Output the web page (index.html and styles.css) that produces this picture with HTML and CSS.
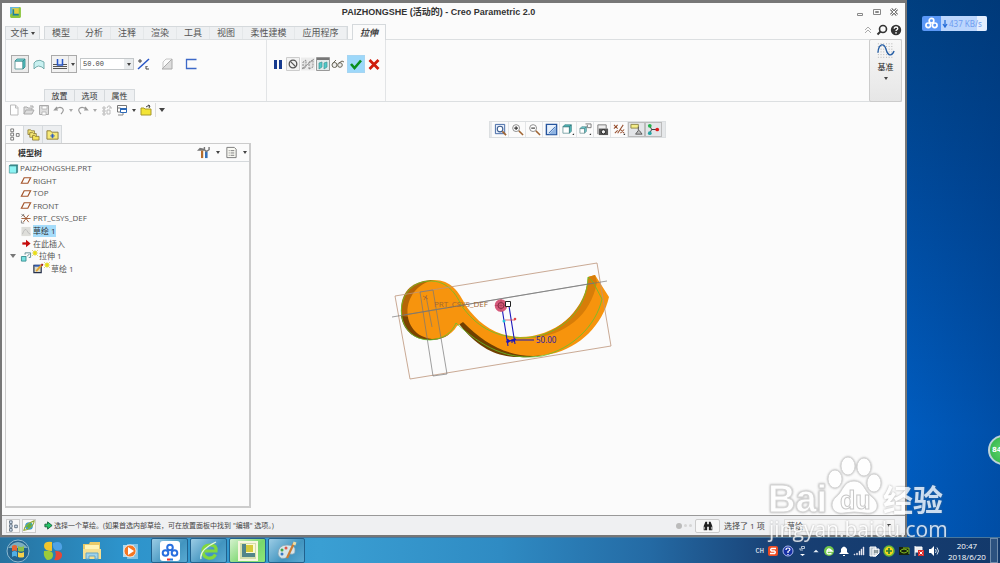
FILE: index.html
```
<!DOCTYPE html>
<html lang="zh">

    <head>
        <meta charset="UTF-8">
        <meta name="viewport" content="width=device-width, initial-scale=1.0">
        <title>PAIZHONGSHE - Creo Parametric 2.0</title>
        <link rel="stylesheet" href="styles.css">
    </head>

    <body>
        <svg class="defs" aria-hidden="true">
            <symbol id="plane" viewBox="0 0 12 12">
                <path d="M4 3h7l-3 6H1z" fill="none" stroke="#a5562c" stroke-width="1.3" />
            </symbol>
            <symbol id="star" viewBox="0 0 6 6">
                <path d="M0 0l6 6M6 0L0 6M3 0v6M0 3h6" stroke="#d8c62a" stroke-width=".6" />
                <circle cx="3" cy="3" r="1.9" fill="#e8df14" />
            </symbol>
        </svg>

        <div class="desktop">
            <main class="window">
                <header class="titlebar">
                    <svg class="app-icon" viewBox="0 0 12 12">
                        <rect x="1" y="1" width="10" height="10" rx="1" fill="#8cc63e" />
                        <path d="M1 1h9L1 8z" fill="#64b6dc" />
                        <rect x="3" y="2" width="6" height="6" fill="#e2cf3f" />
                        <path d="M4 3v5h5" fill="none" stroke="#19819d" stroke-width="1.5" />
                    </svg>
                    <h1>PAIZHONGSHE (活动的) - Creo Parametric 2.0</h1>
                    <div class="win-buttons">
                        <button aria-label="最小化"><svg viewBox="0 0 10 10"><path d="M2.500 6.500h5v2h-5z" fill="none" stroke="#888" /></svg></button>
                        <button aria-label="最大化"><svg viewBox="0 0 10 10"><path d="M1.500 2.500h7v5h-7zM3.500 4.500h3v1h-3z" fill="none" stroke="#888" /></svg></button>
                        <button aria-label="关闭"><svg viewBox="0 0 10 10"><path d="M2 2l6 6M8 2L2 8" stroke="#777" stroke-width="3" /><path d="M2 2l6 6M8 2L2 8" stroke="#fff" /></svg></button>
                    </div>
                </header>

                <nav class="tabs">
                    <button class="file-tab">文件<i class="caret"></i></button>
                    <div class="tab-group">
                        <button>模型</button>
                        <button>分析</button>
                        <button>注释</button>
                        <button>渲染</button>
                        <button>工具</button>
                        <button>视图</button>
                        <button class="wide">柔性建模</button>
                        <button class="wide">应用程序</button>
                    </div>
                    <button class="active-tab">拉伸</button>
                    <div class="help-buttons">
                        <button aria-label="收起"><svg viewBox="0 0 12 12"><path d="M3 6l3-3 3 3M3 9l3-3 3 3" fill="none" stroke="#aaa" /></svg></button>
                        <button aria-label="搜索"><svg viewBox="0 0 12 12"><circle cx="7" cy="5" r="3.500" fill="none" stroke="#333" stroke-width="1.600" /><path d="M4.500 7.500L1.500 10.500" stroke="#333" stroke-width="2" /></svg></button>
                        <button aria-label="帮助"><svg viewBox="0 0 12 12"><circle cx="6" cy="6" r="5.200" fill="#333" /><path d="M4.200 4.700q0-1.700 1.800-1.700t1.800 1.500q0 .8-1 1.300-.8.400-.8 1.300" fill="none" stroke="#fff" stroke-width="1.300" /><circle cx="6" cy="8.900" r=".8" fill="#fff" /></svg></button>
                    </div>
                </nav>

                <section class="ribbon">
                    <div class="options">
                        <div class="tool-row">
                            <button class="tool pressed" aria-label="实体"><svg viewBox="0 0 14 14"><path d="M2 4h8v8H2z" fill="#fff" stroke="#6fa3a3" /><path d="M2 4l2-2h8l-2 2z" fill="#8adede" stroke="#2c8589" stroke-width=".8" /><path d="M10 4l2-2v8l-2 2z" fill="#5cc9c9" stroke="#2c8589" stroke-width=".8" /></svg></button>
                            <button class="tool" aria-label="曲面"><svg viewBox="0 0 14 14"><path d="M2 12V6l2-2q4-2 8 1v7l-2-2q-4-2-6 0z" fill="#c9f1f1" stroke="#6aa5a5" stroke-width=".9" /></svg></button>
                            <div class="split">
                                <button aria-label="深度"><svg viewBox="0 0 14 14"><path d="M0 7.500h4M10 7.500h4M0 9.500h14M0 11.500h14" stroke="#555" /><path d="M4.500 2v6h5V2" fill="#dfe9fb" stroke="#2755c5" stroke-width="1.500" /></svg></button>
                                <button class="split-arrow" aria-label="深度选项"><i class="caret"></i></button>
                            </div>
                            <div class="depth">
                                <input type="text" value="50.00" aria-label="深度值">
                                <button aria-label="最近值"><i class="caret"></i></button>
                            </div>
                            <button class="tool slim" aria-label="反向"><svg viewBox="0 0 14 14"><path d="M1 12L12 2" stroke="#2755c5" stroke-width="1.500" /><path d="M3 2v4M1 4h4M10 9v1M12 12H9V9" fill="none" stroke="#444" /></svg></button>
                            <button class="tool" aria-label="移除材料"><svg viewBox="0 0 14 14"><path d="M2 12L12 2v10z" fill="#ddd" stroke="#aaa" /><path d="M3 5v7M3 5l3-3h6" fill="none" stroke="#bbb" stroke-width=".8" /></svg></button>
                            <button class="tool" aria-label="加厚"><svg viewBox="0 0 14 14"><path d="M12.500 2.500h-10v9h10" fill="none" stroke="#3d69c8" stroke-width="1.300" /></svg></button>
                        </div>
                        <div class="sub-tabs">
                            <button>放置</button>
                            <button>选项</button>
                            <button>属性</button>
                        </div>
                    </div>
                    <div class="confirm">
                        <button aria-label="暂停"><svg viewBox="0 0 14 14"><path d="M3 3h3v9H3zM8 3h3v9H8z" fill="#163a8e" /></svg></button>
                        <button aria-label="无预览"><svg viewBox="0 0 14 14"><path d="M.5.5h13v13H.5z" fill="#f2f2f2" stroke="#ccc" /><circle cx="7" cy="7" r="3.800" fill="none" stroke="#555" stroke-width="1.300" /><path d="M4.400 4.400l5.200 5.200" stroke="#555" stroke-width="1.300" /></svg></button>
                        <button aria-label="分离"><svg viewBox="0 0 14 14"><path d="M0 .5h14v13H0z" fill="#ececec" /><path d="M2 12V5l3-2v7zM8 12V5l4-2v7z" fill="#e2e2e2" stroke="#777" stroke-width=".8" stroke-dasharray="2 1" /><path d="M1 12L13 2" stroke="#888" stroke-width=".8" /></svg></button>
                        <button aria-label="连接"><svg viewBox="0 0 14 14"><path d="M.5.5h13v13H.5z" fill="#e2eaea" stroke="#999" /><path d="M1 2h12" stroke="#777" stroke-width="2" /><path d="M3 12V6l3-1v5zM8 12V6l3-1v5z" fill="#51caca" stroke="#429797" stroke-width=".7" /></svg></button>
                        <button aria-label="特征预览"><svg viewBox="0 0 14 14"><circle cx="3.500" cy="8" r="2.500" fill="#eee" stroke="#666354" /><circle cx="9" cy="8" r="2.300" fill="#eee" stroke="#666354" /><path d="M2 6l3-3M8 6l3-2 2 1" fill="none" stroke="#666354" /></svg></button>
                        <button class="ok" aria-label="确定"><svg viewBox="0 0 14 14"><path d="M2 7l3.500 4L12 3.500" fill="none" stroke="#0a8f1d" stroke-width="2.600" /></svg></button>
                        <button aria-label="取消"><svg viewBox="0 0 14 14"><path d="M2.500 3l9 9M11.500 3l-9 9" stroke="#cf1c0c" stroke-width="2.800" /></svg></button>
                    </div>
                    <button class="datum">
                        <svg viewBox="0 0 20 20"><path d="M1 2h18M1 5h18M1 8h18M1 11h18M1 14h18M1 17h18" stroke="#aaa" stroke-dasharray="1 2" /><path d="M1 12C2 1 8 1 10 8s6 9 9 2" fill="none" stroke="#245da5" stroke-width="1.500" /></svg>
                        <span>基准</span>
                        <i class="caret"></i>
                    </button>
                </section>

                <div class="quick">
                    <button aria-label="新建"><svg viewBox="0 0 12 12"><path d="M2.500 1h5l2.500 2.500V11H2.500zM7.500 1v3H10" fill="#fff" stroke="#bbb" /></svg></button>
                    <button aria-label="打开"><svg viewBox="0 0 12 12"><path d="M1 10V3h3l1 1h4v2M1 10l2-4h8l-2 4zM7 2h3v2" fill="#ddd" stroke="#aaa" /></svg></button>
                    <button aria-label="保存"><svg viewBox="0 0 12 12"><path d="M1.500 1.500h9v9h-9z" fill="#ddd" stroke="#aaa" /><path d="M4 2h5v3H4zM4 8h4v3H4z" fill="#fff" stroke="#aaa" stroke-width=".7" /></svg></button>
                    <button aria-label="撤消"><svg viewBox="0 0 12 12"><path d="M4 3L1.500 6H5M2 6q4-4 7-2t-1 6" fill="none" stroke="#999" stroke-width="1.200" /></svg></button>
                    <button class="arrow" aria-label="撤消列表"><i class="caret light"></i></button>
                    <button aria-label="重做"><svg viewBox="0 0 12 12"><path d="M8 3l2.500 3H7M10 6Q6 2 3 4t1 6" fill="none" stroke="#999" stroke-width="1.200" /></svg></button>
                    <button class="arrow" aria-label="重做列表"><i class="caret light"></i></button>
                    <button aria-label="再生"><svg viewBox="0 0 12 12"><path d="M2 3h2v2H2zM2 6h2v2H2zM2 9h2v2H2zM6 6h3v4H6zM6 4q1-3 3-2l1 2M8 4h3" fill="none" stroke="#bbb" /></svg></button>
                    <button class="roomy" aria-label="窗口"><svg viewBox="0 0 12 12"><path d="M1.500 4V1.500h9V5M1.500 4h3v4h-3z" fill="#fff" stroke="#777" /><path d="M4.500 4.500h6v4h-6z" fill="#fff" stroke="#2c68b6" /><path d="M4 5h7" stroke="#2c68b6" stroke-width="2" /><path d="M2 11h5V9" fill="none" stroke="#888" /></svg></button>
                    <button class="arrow" aria-label="窗口列表"><i class="caret"></i></button>
                    <button aria-label="关闭窗口"><svg viewBox="0 0 12 12"><path d="M1 11V4h3l1 1h6v6z" fill="#f3e436" stroke="#a7982a" /><path d="M6 3q2-2 4-1M8 1l2 1-1 2" fill="none" stroke="#444" /></svg></button>
                    <span class="sep"></span>
                    <button class="arrow" aria-label="自定义"><i class="caret big"></i></button>
                </div>

                <div class="work">
                    <aside class="navigator">
                        <div class="nav-tabs">
                            <button class="current" aria-label="模型树"><svg viewBox="0 0 14 14"><path d="M3 1h3v3H3zM3 5.500h3v3H3zM3 10h3v3H3zM9 6h3v3H9z" fill="#fff" stroke="#666" stroke-width=".9" /></svg></button>
                            <button aria-label="文件夹浏览器"><svg viewBox="0 0 14 14"><path d="M1 7V2h3l1 1h3v4z" fill="#f4e779" stroke="#806e2b" stroke-width=".8" /><path d="M3 10V5h3l1 1h3v4z" fill="#f4e779" stroke="#806e2b" stroke-width=".8" /><path d="M6 13V8h2l1 1h4v4z" fill="#f4e45a" stroke="#806e2b" stroke-width=".8" /></svg></button>
                            <button aria-label="收藏夹"><svg viewBox="0 0 14 14"><path d="M1 12V3h4l1 1.500h7V12z" fill="#f7ea79" stroke="#8c7c37" /><path d="M7 6v5M4.500 8.500h5M5.500 7l3 3M8.500 7l-3 3" stroke="#2454c5" stroke-width=".9" /></svg></button>
                        </div>
                        <div class="tree-panel">
                            <div class="tree-head">
                                <h2>模型树</h2>
                                <button aria-label="设置"><svg viewBox="0 0 14 14"><path d="M0 5l3-3 5 1v2H4z" fill="#777" /><path d="M5.500 5v8" stroke="#b56d2d" stroke-width="2.400" /><path d="M10 6v7" stroke="#3571ba" stroke-width="2.800" /><path d="M8 1v3l2 2 3-2V1" fill="none" stroke="#777" stroke-width="1.500" /></svg></button>
                                <i class="caret"></i>
                                <button aria-label="显示"><svg viewBox="0 0 14 14"><path d="M2 1.500h8l2 2v9H2z" fill="#fafaf4" stroke="#777" /><path d="M4 5h1M4 7.500h1M4 10h1M6 5h4M6 7.500h4M6 10h4" stroke="#777" /></svg></button>
                                <i class="caret"></i>
                            </div>
                            <ul class="tree">
                                <li class="root"><svg viewBox="0 0 12 12"><path d="M2 3h8v8H2z" fill="#8df4f4" stroke="#4a9a9c" stroke-width=".8" /><path d="M2 3l1-1h8L10 3zM10 3l1-1v8l-1 1z" fill="#3b8b8e" stroke="#2b7b7e" stroke-width=".6" /></svg>PAIZHONGSHE.PRT</li>
                                <li><svg><use href="#plane" /></svg>RIGHT</li>
                                <li><svg><use href="#plane" /></svg>TOP</li>
                                <li><svg><use href="#plane" /></svg>FRONT</li>
                                <li><svg viewBox="0 0 12 12"><path d="M1 6h10M3 2l6 8M9 2l-6 8" stroke="#9f5932" /><path d="M1 1l3 3M4 1L1 4M1 8v3h3" fill="none" stroke="#666" stroke-width=".8" /></svg>PRT_CSYS_DEF</li>
                                <li><svg viewBox="0 0 12 12"><path d="M1 1h10v10H1z" fill="#dededa" /><path d="M2 9q3-8 5-4t4 4" fill="none" stroke="#bbb" /></svg><mark>草绘 1</mark></li>
                                <li><svg viewBox="0 0 12 12"><path d="M2 6h7" stroke="#c50c0c" stroke-width="2.500" /><path d="M6 2l5 4-5 4z" fill="#c50c0c" /></svg>在此插入</li>
                                <li class="open"><i class="caret big"></i><svg viewBox="0 0 12 12"><path d="M1 6h5v5H1z" fill="#79e0e0" stroke="#378f92" /><path d="M5 4V2h6v5H9M7 6l3-3" fill="none" stroke="#5a8a90" /></svg><svg class="new"><use href="#star" /></svg>拉伸 1</li>
                                <li class="nested"><svg viewBox="0 0 12 12"><path d="M1.500 2.500h8v8h-8z" fill="#dcdccb" stroke="#26314c" stroke-width="1.300" /><path d="M2 3h7" stroke="#3159ab" stroke-width="2" /><path d="M4 9l6-7" stroke="#e6a52b" stroke-width="2" /><path d="M10 3l1-2" stroke="#a22" stroke-width="2" /></svg><svg class="new"><use href="#star" /></svg>草绘 1</li>
                            </ul>
                        </div>
                    </aside>

                    <section class="viewport">
                        <div class="view-bar">
                            <button aria-label="重新调整"><svg viewBox="0 0 14 14"><path d="M1.500 1.500h10v10h-10z" fill="#e7eefb" stroke="#3f64a1" /><circle cx="6.500" cy="6.500" r="3" fill="#fff" stroke="#3d5f91" stroke-width="1.200" /><path d="M9 9l4 4" stroke="#a06431" stroke-width="1.800" /></svg></button>
                            <button aria-label="放大"><svg viewBox="0 0 14 14"><circle cx="5.500" cy="5.500" r="3.700" fill="#fff" stroke="#888" /><path d="M3.500 5.500h4M5.500 3.500v4" stroke="#333" stroke-width="1.200" /><path d="M8.500 8.500L13 13" stroke="#a06431" stroke-width="1.600" /></svg></button>
                            <button aria-label="缩小"><svg viewBox="0 0 14 14"><circle cx="5.500" cy="5.500" r="3.700" fill="#fff" stroke="#888" /><path d="M3.500 5.500h4" stroke="#333" stroke-width="1.200" /><path d="M8.500 8.500L13 13" stroke="#a06431" stroke-width="1.600" /></svg></button>
                            <button aria-label="重画"><svg viewBox="0 0 14 14"><path d="M1.500 1.500h11v11h-11z" fill="#e6f0fc" stroke="#25549d" stroke-width="1.500" /><path d="M4 12l8-8v8z" fill="#8fb4e2" /><path d="M4 11l7-7" stroke="#3568ae" /></svg></button>
                            <button aria-label="显示样式"><svg viewBox="0 0 14 14"><path d="M1 4h7v7H1z" fill="#fff" stroke="#7ba3a5" /><path d="M1 4l2-2h7L8 4zM8 4l2-2v7l-2 2z" fill="#54bfc1" stroke="#34797c" stroke-width=".8" /><path d="M13 11v2h-2z" fill="#333" /></svg></button>
                            <button aria-label="已保存方向"><svg viewBox="0 0 14 14"><path d="M1 6h5v5H1z" fill="#fff" stroke="#7b9b9d" stroke-width=".9" /><path d="M1 6l2-2h5L6 6zM6 6l2-2v5l-2 2z" fill="#6cc8ca" stroke="#55888b" stroke-width=".7" /><path d="M7 1h6v4H9M9 2v3" fill="none" stroke="#777" /><path d="M13 11v2h-2z" fill="#333" /></svg></button>
                            <button aria-label="视图管理器"><svg viewBox="0 0 14 14"><path d="M2 12V2h9v4" fill="#eee" stroke="#777" /><path d="M3 6h10v7H3z" fill="#555" /><circle cx="8" cy="9.500" r="2.300" fill="#eee" stroke="#222" /></svg></button>
                            <button aria-label="基准显示"><svg viewBox="0 0 14 14"><path d="M1 2l4 4M5 2L1 6M5 11l6-9M8 7l4 4M12 7l-4 4M2 11l3-3" stroke="#975030" stroke-width="1.100" /><path d="M13 11v2h-2z" fill="#333" /></svg></button>
                            <button class="pressed" aria-label="注释显示"><svg viewBox="0 0 14 14"><path d="M1 1.500h8v4H1z" fill="#f5ee88" stroke="#908748" /><path d="M9 4v4l-3 4h7l-3-4" fill="#bbb" stroke="#555" /></svg></button>
                            <button class="pressed" aria-label="旋转中心"><svg viewBox="0 0 14 14"><path d="M3 3l2 4-2 4M5 7h6" fill="none" stroke="#333" /><circle cx="3" cy="3" r="2" fill="#22b24b" /><circle cx="3" cy="11" r="2" fill="#24a5a4" /><circle cx="11" cy="7" r="2" fill="#df1c1c" /></svg></button>
                        </div>

                        <svg class="model" viewBox="0 0 240 140">
                            <!-- dark side faces -->
                            <path d="M17 60C17 40 30 30 50 30L45 89C28 88 17 74 17 60z" fill="#b56507" />
                            <path d="M17 66C20 84 34 91 49 90C62 89 68 83 72 75L60 70z" fill="#7c4300" />
                            <path d="M75 74C95 99 113 107 136 107C151 108 163 105 174 98L140 96C115 95 95 86 80 70z" fill="#704000" />
                            <!-- front face -->
                            <path d="M50 30C67 30 75 42 82 56C94 72 109 86 136 87C169 87 203 63 204 27L211 25L218 36L225 47C219 74 196 98 167 104C133 111 104 98 79 72L73 76C67 86 57 89 48 89C14 85 16 37 50 30z" fill="#f7940d" />
                            <path d="M204 27L211 25L213 32C207 66 180 86 147 88C176 82 202 58 204 27z" fill="#d77d08" />
                            <path d="M204 27L209 32L218 49C212 76 188 99 158 106C124 111 98 97 72 73C68 83 59 89 46 90C12 90 8 44 35 33C60 25 72 43 77 55C92 76 109 87 140 88C175 86 203 62 204 27z" fill="none" stroke="#62c42c" stroke-width=".8" />
                            <!-- datum planes -->
                            <path d="M11 46L213 13L227 96L26 129z" fill="none" stroke="#bd947a" stroke-width=".8" />
                            <path d="M36 42L49 40L63 124L49 126zM8 67L223 31M20 65L210 33M42 46L48 77" fill="none" stroke="#777" stroke-width=".7" />
                            <path d="M39 46l5 3M43 45l-3 5" stroke="#a05728" stroke-width=".6" />
                            <text x="50" y="57" class="csys">PRT_CSYS_DEF</text>
                            <!-- drag handle and depth dimension -->
                            <path d="M118 58L124 96M125 56L131 94M122 92l10-3M124 93v-4M128 93v-4M131 90h19" fill="none" stroke="#1b17bb" stroke-width="1.100" />
                            <path d="M123 93v-4l4 2 4-3v4l-4-1z" fill="#1b17bb" />
                            <path d="M121 70h10" stroke="#df3540" stroke-width=".7" />
                            <circle cx="131" cy="69" r="1.300" fill="#e24545" />
                            <circle cx="120" cy="71" r="1.500" fill="#25c2dd" />
                            <circle cx="117" cy="55.500" r="6.300" fill="#d65a7b" />
                            <circle cx="117" cy="55.500" r="3" fill="none" stroke="#832842" />
                            <path d="M111 55.500h12M117 49v13" stroke="#9c3450" stroke-width=".5" />
                            <path d="M121.500 51.500h5v5h-5z" fill="#fff" stroke="#222" />
                            <text x="152" y="93" class="dim">50.00</text>
                        </svg>
                    </section>
                </div>

                <footer class="status">
                    <button aria-label="导航器"><svg viewBox="0 0 14 14"><path d="M3 1h3v3H3zM3 5.500h3v3H3zM3 10h3v3H3zM9 6h3v3H9z" fill="#dceafa" stroke="#456" stroke-width=".9" /></svg></button>
                    <button aria-label="浏览器"><svg viewBox="0 0 14 14"><circle cx="7" cy="7" r="4.500" fill="#3a9ed2" /><path d="M4 8q2-4 6-4l-2 6z" fill="#57b63c" /><path d="M1 12Q2 5 13 1q0 6-8 10z" fill="none" stroke="#91a936" stroke-width="1.300" /></svg></button>
                    <p><svg viewBox="0 0 10 10"><path d="M1 3.500h3V1l5 4-5 4V6.500H1z" fill="#22c768" stroke="#115d36" /></svg>选择一个草绘。(如果首选内部草绘，可在放置面板中找到 "编辑" 选项。)</p>
                    <span class="dots"><b></b><b></b><b></b></span>
                    <button class="find" aria-label="查找"><svg viewBox="0 0 14 14"><path d="M2 12V7l2-5h2v10zM8 12V2h2l2 5v5zM6 5h2v3H6z" fill="#222" /><path d="M3 8v3M11 8v3" stroke="#bbb" /></svg></button>
                    <span class="count">选择了 1 项</span>
                    <select aria-label="过滤器">
                        <option>草绘</option>
                    </select>
                    <i class="caret filter-caret"></i>
                </footer>
            </main>

            <div class="net-speed">
                <svg viewBox="0 0 16 14"><g fill="none" stroke="#fff" stroke-width="1.800"><circle cx="8" cy="4" r="2.500" /><circle cx="4.500" cy="9" r="2.500" /><circle cx="11.500" cy="9" r="2.500" /></g></svg>
                <span><svg viewBox="0 0 6 10"><path d="M3 1v7M1 5l2 3 2-3" fill="none" stroke="#296fd8" stroke-width="1.300" /></svg>437 KB/s</span>
            </div>
            <div class="ball">84</div>
        </div>

        <footer class="taskbar">
            <button class="start" aria-label="开始"><svg viewBox="0 0 24 24"><circle cx="12" cy="12" r="11" fill="#23638d" stroke="#8db9d0" /><path d="M2 9Q12-3 22 9" fill="#7caebe" /><path d="M6 7q3-2 5 0v5q-2-1-5 0z" fill="#e46634" /><path d="M12 7q3 2 6 0v5q-3 1-6 0z" fill="#8ac14b" /><path d="M6 13q3-2 5 0v5q-2-2-5 0z" fill="#51afe5" /><path d="M12 13q3 2 6 0v5q-3 1-6 0z" fill="#f6cf4b" /></svg></button>
            <button aria-label="浏览器"><svg viewBox="0 0 20 20"><path d="M9 1Q1 0 1 5t8 5z" fill="#f2c52c" /><path d="M10 2q8-3 9 3t-7 4q-3-3-2-7z" fill="#4fa2e5" /><path d="M1 10q9-1 9 4t-6 5Q0 16 1 10z" fill="#9ccb3a" /><path d="M12 10q8 0 7 5t-8 4q3-5 1-9z" fill="#e54838" /></svg></button>
            <button aria-label="资源管理器"><svg viewBox="0 0 20 20"><path d="M1 3h6l1-2h10v17H1z" fill="#e9ca69" /><path d="M3 4h14v9H3z" fill="#fff4b8" /><path d="M1 8h18v10H1z" fill="#f6df91" /><path d="M4 18v-6h12v6h-3v-3H7v3z" fill="#9ed2ec" stroke="#65a5c6" /></svg></button>
            <button aria-label="播放器"><svg viewBox="0 0 20 20"><path d="M6 3h11v15H6z" fill="#80c3e6" /><path d="M2 4h11v12H2z" fill="#b2daed" /><circle cx="9" cy="10" r="6" fill="#f57723" stroke="#fff" stroke-width=".7" /><path d="M7 6l6 4-6 4z" fill="#fff" /></svg></button>
            <button class="running" aria-label="网盘"><svg viewBox="0 0 20 20"><rect width="20" height="20" rx="3" fill="#fff" /><g fill="none" stroke="#286fdf" stroke-width="2"><circle cx="10" cy="6.500" r="2.800" /><circle cx="5.500" cy="12" r="2.800" /><circle cx="14.500" cy="12" r="2.800" /></g><path d="M7 18.500h3" stroke="#e33" stroke-width="2" /><path d="M10 18.500h3" stroke="#27d" stroke-width="2" /></svg></button>
            <button class="running" aria-label="安全浏览器"><svg viewBox="0 0 20 20"><path d="M16.500 13.500Q14 18 9 17t-5-7 7-6 6 6H6" fill="none" stroke="#81d83d" stroke-width="3.200" /><path d="M2 18Q0 9 17 1" fill="none" stroke="#e6f9d8" stroke-width="1.300" /></svg></button>
            <button class="running creo" aria-label="Creo"><svg viewBox="0 0 20 20"><path d="M1 1h18v18H1z" fill="#d3ddad" stroke="#f6f6df" stroke-width="2" /><path d="M6 3h11v11H6z" fill="#fafad2" /><path d="M4 3h4v9h9v4H4z" fill="#52858a" /><path d="M8 4h7v7H8z" fill="#d5c93a" /></svg></button>
            <button class="running" aria-label="画图"><svg viewBox="0 0 20 20"><path d="M1 13Q1 4 10 4t8 6q0 4-5 3-2 0-2 3-8 4-10-3z" fill="#d6e5ea" stroke="#819fae" stroke-width=".7" /><circle cx="5" cy="9" r="1.500" fill="#43a547" /><circle cx="9" cy="7" r="1.500" fill="#dd5745" /><circle cx="5" cy="13" r="1.500" fill="#3978c4" /><path d="M10 17L17 2" stroke="#c97c35" stroke-width="2.200" /><path d="M17 4l1-3" stroke="#eddca4" stroke-width="3" /></svg></button>

            <div class="tray">
                <span class="lang">CH</span>
                <svg viewBox="0 0 12 12"><rect x="1" y="1" width="10" height="10" rx="2" fill="#ed4c25" /><path d="M9 3.500H4.500q-1.500 1 0 2.500h3q1.500 1 0 2.500H3" fill="none" stroke="#fff" stroke-width="1.500" /></svg>
                <svg viewBox="0 0 12 12"><circle cx="6" cy="6" r="5" fill="#1630a4" stroke="#acb8ee" /><path d="M4 5q0-2 2-2t2 1.500q0 1-2 2V8M6 9v1" fill="none" stroke="#fff" stroke-width="1.200" /></svg>
                <svg viewBox="0 0 12 12"><path d="M4.500 1.500h3v2h-3zM3 3v2h3" fill="none" stroke="#dce5ef" stroke-width=".8" /><path d="M3 9h5L5.500 11z" fill="#fff" /></svg>
                <svg class="thin" viewBox="0 0 12 12"><path d="M2 8h8L6 4z" fill="#e8f0f8" /></svg>
                <svg viewBox="0 0 12 12"><circle cx="6" cy="6" r="5" fill="#71c64b" /><path d="M8.500 8.500Q3 10 4 6t5 0H4" fill="none" stroke="#fff" stroke-width="1.400" /></svg>
                <svg viewBox="0 0 12 12"><path d="M1 9l2-2V4q3-5 6 0v3l2 2zM5 10h2v1H5z" fill="#fff" /></svg>
                <svg viewBox="0 0 12 12"><path d="M1 9h1v1H1zM3.500 8h1v2h-1zM6 6h1v4H6zM8 4h1v6H8zM10 2h1v8h-1z" fill="#fff" stroke="#ccd" stroke-width=".5" /></svg>
                <svg viewBox="0 0 12 12"><path d="M2 2h6v9H2zM5 4h6v4L8 11H5z" fill="#bbc5cd" stroke="#fff" /><path d="M7 5v3M9 5v3" stroke="#566" /></svg>
                <svg viewBox="0 0 12 12"><circle cx="6" cy="6" r="5" fill="#f2d51d" stroke="#65b638" stroke-width="1.500" /><path d="M6 3v6M3 6h6" stroke="#297c33" stroke-width="1.700" /></svg>
                <svg viewBox="0 0 12 12"><path d="M1 2h10v8H1z" fill="#17230d" /><path d="M2 6q4-4 8 0-4 4-8 0zM5 3h6v6" fill="none" stroke="#83bc22" /></svg>
                <svg viewBox="0 0 12 12"><path d="M2 1v10M2 2h7v5H2" fill="#eee" stroke="#fff" /><path d="M5 5h6v6H5z" fill="#d92e2e" /><path d="M6.500 6.500l3 3M9.500 6.500l-3 3" stroke="#fff" /></svg>
                <svg viewBox="0 0 12 12"><path d="M1 4h2l3-3v10L3 8H1z" fill="#fff" /><path d="M7.500 4q1.500 2 0 4M9 2.500q3 3.500 0 7" fill="none" stroke="#dde7f0" /></svg>
            </div>
            <div class="clock"><span>20:47</span><span>2018/6/20</span></div>
            <button class="show-desktop" aria-label="显示桌面"></button>
        </footer>

        <svg class="watermark" viewBox="0 0 184 92">
            <text x="2" y="61" class="wm-bai">Bai</text>
            <g class="paw">
                <ellipse cx="69" cy="28" rx="7" ry="9" />
                <ellipse cx="82" cy="15" rx="7" ry="9" />
                <ellipse cx="98" cy="16" rx="7" ry="9" />
                <ellipse cx="108" cy="32" rx="7" ry="9" />
                <path d="M88 30C77 30 77 41 70 46C62 53 67 64 78 62Q88 60 99 62C112 64 115 53 106 46C98 40 98 30 88 30z" />
            </g>
            <text x="74" y="58" class="wm-du">du</text>
            <text x="117" y="60" class="wm-cn">经验</text>
            <text x="3" y="86" class="wm-url">jingyan.baidu.com</text>
        </svg>
    </body>

</html>
```

FILE: styles.css
```
* {
    box-sizing: border-box;
}

body {
    margin: 0;
    height: 100vh;
    display: flex;
    flex-direction: column;
    position: relative;
    overflow: hidden;
    font-family: "Open Sans", "Noto Sans CJK SC", sans-serif;
    font-size: 8px;
    line-height: 12px;
    color: #555;
}

button {
    display: flex;
    align-items: center;
    justify-content: center;
    margin: 0;
    padding: 0;
    border: none;
    background: none;
    font: inherit;
    color: inherit;
    cursor: pointer;
}

svg {
    display: block;
    flex: none;
}

h1,
h2,
p,
ul {
    margin: 0;
    padding: 0;
}

.defs {
    position: absolute;
    width: 0;
    height: 0;
}

.caret {
    flex: none;
    border: 2px solid transparent;
    border-top: 3px solid #444;
    border-bottom: none;
}

.caret.light {
    border-top-color: #aaa;
}

.caret.big {
    border-width: 4px 3px 0;
}

.desktop {
    flex: 1;
    min-height: 0;
    display: flex;
    position: relative;
    background: linear-gradient(#003f80, #004a9c 35%, #005cbf 80%, #005abb);
}

.desktop::after {
    content: "";
    position: absolute;
    inset: 0 0 0 auto;
    width: 93px;
    background: linear-gradient(90deg, transparent, rgba(0, 40, 100, 0.25));
}

/* application window */

.window {
    flex: 1;
    min-width: 0;
    margin-right: 93px;
    display: flex;
    flex-direction: column;
    border: 2px solid #777;
    border-top-width: 3px;
    background: #fbfbfb;
}

.titlebar {
    display: flex;
    align-items: center;
    height: 21px;
    padding: 0 6px 3px 7px;
}

.app-icon {
    width: 13px;
    height: 13px;
}

.titlebar h1 {
    flex: 1;
    text-align: center;
    font: bold 9px/16px "Liberation Sans", "Noto Sans CJK SC", sans-serif;
    color: #333;
}

.win-buttons {
    display: flex;
    gap: 7px;
}

.win-buttons svg {
    width: 10px;
    height: 10px;
}

.tabs {
    display: flex;
    align-items: flex-end;
    height: 15px;
    margin: 0 3px;
    font-size: 9px;
    color: #555;
}

.file-tab,
.tab-group {
    height: 13px;
    border: 1px solid #d5d9dc;
    border-bottom: none;
    background: #eef0f2;
}

.file-tab {
    width: 35px;
    gap: 2px;
    margin-right: 4px;
}

.tab-group {
    display: flex;
}

.tab-group button {
    width: 33px;
    border-right: 1px solid #e4e7e9;
}

.tab-group .wide {
    width: 52px;
}

.active-tab {
    height: 16px;
    width: 34px;
    margin: 0 auto -1px 4px;
    border: 1px solid #d5d9dc;
    border-bottom: none;
    background: #fbfbfb;
    font-style: italic;
    font-weight: bold;
    color: #444;
    z-index: 1;
}

.help-buttons {
    display: flex;
    gap: 2px;
    padding-bottom: 3px;
}

.help-buttons svg {
    width: 12px;
    height: 12px;
}

.ribbon {
    display: flex;
    height: 63px;
    margin: 0 3px;
    border: 1px solid #dcdfe1;
}

.options {
    width: 261px;
    display: flex;
    flex-direction: column;
    justify-content: space-between;
    padding-top: 15px;
    border-right: 1px solid #e2e4e6;
}

.tool-row {
    display: flex;
    align-items: center;
    gap: 3px;
    padding-left: 5px;
}

.tool {
    width: 16px;
    height: 18px;
    margin-right: 5px;
}

.tool svg,
.split svg,
.confirm svg {
    width: 14px;
    height: 14px;
}

.tool.pressed {
    width: 18px;
    margin-right: 0;
    border: 1px solid #aaa;
    background: #ececec;
}

.tool.pressed + .tool {
    width: 13px;
    margin-right: 3px;
}

.tool.slim {
    width: 14px;
}

.split {
    display: flex;
    height: 18px;
    border: 1px solid #aaa;
    background: #f2f2f2;
}

.split button {
    width: 16px;
}

.split .split-arrow {
    width: 8px;
    border-left: 1px solid #ccc;
}

.depth {
    display: flex;
    width: 54px;
    height: 12px;
    border: 1px solid #c4c8ca;
    background: #fff;
}

.depth input {
    flex: 1;
    min-width: 0;
    padding: 0 2px;
    border: none;
    outline: none;
    background: none;
    font: 7px/10px "Liberation Mono", monospace;
    color: #444;
}

.depth button {
    width: 9px;
    background: #e9ecee;
}

.sub-tabs {
    display: flex;
    margin-left: 38px;
}

.sub-tabs button {
    width: 30px;
    height: 12px;
    border: 1px solid #d5d9dc;
    border-bottom: none;
    border-left-width: 0;
    background: #eef0f2;
    color: #333;
}

.sub-tabs button:first-child {
    width: 31px;
    border-left-width: 1px;
}

.confirm {
    width: 119px;
    display: flex;
    align-items: flex-start;
    gap: 1px;
    padding: 15px 0 0 4px;
    border-right: 1px solid #e2e4e6;
}

.confirm button {
    width: 14px;
    height: 18px;
}

.confirm .ok {
    width: 18px;
    margin-left: 1px;
    margin-right: 1px;
    border: 1px solid #a6d5f2;
    background: #9dd8fa;
}

.datum {
    width: 33px;
    margin: -1px -1px -1px auto;
    flex-direction: column;
    justify-content: flex-start;
    gap: 1px;
    padding-top: 2px;
    border: 1px solid #ccc;
    border-radius: 2px;
    background: linear-gradient(#f7f7f7, #e6e6e6);
    color: #222;
}

.datum svg {
    width: 20px;
    height: 18px;
}

.datum .caret {
    margin-top: 3px;
}

.quick {
    display: flex;
    align-items: center;
    height: 16px;
    padding-left: 6px;
    gap: 3px;
}

.quick svg {
    width: 12px;
    height: 12px;
}

.quick .arrow {
    width: 6px;
}

.sep {
    width: 1px;
    height: 14px;
    background: #ddd;
}

/* model tree and graphics area */

.work {
    flex: 1;
    min-height: 0;
    display: flex;
    padding: 0 0 7px 3px;
}

.navigator {
    width: 246px;
    display: flex;
    flex-direction: column;
    padding-top: 7px;
}

.nav-tabs {
    display: flex;
}

.nav-tabs button {
    width: 19px;
    height: 18px;
    border: 1px solid #d5d9dc;
    border-left-width: 0;
    border-bottom: none;
    background: #eceef0;
}

.nav-tabs .current {
    border-left-width: 1px;
    background: #fbfbfb;
}

.nav-tabs svg,
.tree-head svg {
    width: 13px;
    height: 13px;
}

.tree-panel {
    flex: 1;
    border: 1px solid #ccc;
    border-right-width: 2px;
    border-bottom-width: 2px;
}

.tree-head {
    display: flex;
    align-items: center;
    gap: 5px;
    height: 18px;
    padding: 0 2px 0 12px;
    border-bottom: 1px solid #d5d9dc;
}

.tree-head h2 {
    flex: 1;
    font-size: 8px;
    color: #333;
}

.tree-head h2 + button {
    margin-right: 1px;
}

.tree {
    display: grid;
    height: 113px;
    list-style: none;
}

.tree li {
    display: flex;
    align-items: center;
    gap: 1px;
    padding-left: 14px;
    white-space: nowrap;
}

.tree svg {
    width: 12px;
    height: 11px;
}

.tree .new {
    width: 6px;
    height: 6px;
    align-self: flex-start;
    margin-left: -1px;
}

.tree .root {
    padding-left: 1px;
}

.tree .open {
    padding-left: 4px;
}

.tree .open .caret {
    margin-right: 3px;
    border-top-color: #777;
}

.tree .nested {
    padding-left: 26px;
}

mark {
    background: #a5dcfa;
    color: #333;
}

.viewport {
    flex: 1;
    display: flex;
    flex-direction: column;
    align-items: center;
    position: relative;
    padding-top: 3px;
}

.view-bar {
    display: flex;
    height: 17px;
    padding: 0 3px 0 2px;
    margin-right: 1px;
    border: 1px solid #dcdfe1;
    background: #e6e8ea;
}

.view-bar button {
    width: 17px;
    border-right: 1px solid #e3e5e7;
    background: #fbfbfb;
}

.view-bar .pressed {
    border: 1px solid #bbb;
    background: #e3e5e8;
}

.view-bar svg {
    width: 13px;
    height: 13px;
}

.model {
    position: absolute;
    left: 133px;
    top: 132px;
    width: 240px;
    height: 140px;
}

.csys {
    font: 8px "Open Sans", sans-serif;
    fill: #a2672e;
}

.dim {
    font: 8px "Noto Sans", sans-serif;
    fill: #2b1bab;
}

.status {
    display: flex;
    align-items: center;
    height: 20px;
    padding: 0 10px 0 4px;
    border-top: 1px solid #999;
    background: #eff0f2;
    color: #444;
}

.status button {
    width: 14px;
    height: 14px;
    margin-right: 2px;
    border: 1px solid #ccc;
    background: #f8f8f8;
}

.status button svg {
    width: 12px;
    height: 12px;
}

.status p {
    flex: 1;
    display: flex;
    align-items: center;
    gap: 1px;
    margin-left: 6px;
    font-size: 7px;
    white-space: nowrap;
}

.status p svg {
    width: 9px;
    height: 9px;
}

.dots {
    display: flex;
    align-items: center;
    gap: 2px;
    margin-right: 3px;
}

.dots b {
    width: 3px;
    height: 3px;
    border-radius: 50%;
    background: #d5d5d5;
}

.dots b:first-child {
    width: 6px;
    height: 6px;
    background: #bbb;
}

.status .find {
    width: 25px;
    margin-right: 4px;
    border-radius: 2px;
}

.count {
    width: 60px;
}

.status select {
    width: 111px;
    height: 13px;
    padding: 0 2px;
    border: 1px solid #ddd;
    border-radius: 0;
    appearance: none;
    background: #f6f6f6;
    font: inherit;
    line-height: 11px;
    color: #444;
}

.filter-caret {
    margin-left: -8px;
    margin-right: 4px;
    pointer-events: none;
}

/* desktop widgets */

.net-speed {
    position: absolute;
    top: 16px;
    right: 13px;
    z-index: 1;
    display: flex;
    align-items: center;
    width: 65px;
    height: 15px;
    border-radius: 2px;
    overflow: hidden;
    background: #5b98f7;
}

.net-speed svg {
    width: 19px;
    height: 13px;
}

.net-speed span {
    flex: 1;
    display: flex;
    align-items: center;
    gap: 1px;
    padding-left: 1px;
    background: linear-gradient(90deg, #bcd6fd 78%, #e5effe 78%);
    font: 8px/15px "Noto Sans", sans-serif;
    white-space: nowrap;
    color: #6f9df0;
}

.net-speed span svg {
    width: 6px;
    height: 10px;
}

.ball {
    position: absolute;
    top: 435px;
    right: -18px;
    z-index: 1;
    width: 30px;
    height: 30px;
    padding-left: 2px;
    border: 2px solid #bdd3d8;
    border-radius: 50%;
    background: radial-gradient(#63d871, #2bae43);
    font: bold 7px/26px "DejaVu Sans", sans-serif;
    color: #fff;
}

/* taskbar */

.taskbar {
    display: flex;
    align-items: center;
    height: 26px;
    padding: 0 2px 0 3px;
    border-top: 1px solid #48779d;
    background: linear-gradient(90deg, #26729f, #2d93cb 12%, #3a9fd3 32%, #2f8bc3 50%, #246aa4 65%, #183f73 78%, #13396b);
    color: #fff;
}

.taskbar button {
    width: 37px;
    height: 25px;
    margin-right: 2px;
}

.taskbar button svg {
    width: 20px;
    height: 20px;
}

.taskbar .start {
    width: 29px;
}

.taskbar .start svg {
    width: 24px;
    height: 24px;
}

.taskbar .running {
    border: 1px solid #21618d;
    border-radius: 2px;
    background: linear-gradient(135deg, #9bcce5, #4194bf 60%, #5aaad2);
}

.taskbar .creo {
    background: linear-gradient(135deg, #d5f2cf, #79d66b 60%, #8fe779);
}

.tray {
    display: flex;
    align-items: center;
    gap: 3px;
    margin-left: auto;
    margin-right: 4px;
}

.tray svg {
    width: 12px;
    height: 12px;
}

.tray .thin {
    width: 8px;
    height: 8px;
}

.lang {
    font: 7px/12px "Liberation Mono", monospace;
}

.clock {
    display: flex;
    flex-direction: column;
    width: 46px;
    text-align: center;
    line-height: 11px;
}

.taskbar .show-desktop {
    width: 8px;
    margin: 0;
    border: 1px solid #6f8bab;
    background: #2c5280;
}

.watermark {
    position: absolute;
    right: 50px;
    bottom: 20px;
    z-index: 2;
    width: 184px;
    height: 92px;
    pointer-events: none;
    fill: #fff;
    opacity: 0.8;
    filter: drop-shadow(0 0 1px rgba(110, 110, 110, 0.7));
}

.paw {
    stroke: #ccc;
}

.wm-bai {
    font: bold 38px "Liberation Sans", sans-serif;
    stroke: #ccc;
}

.wm-du {
    font: bold 25px "Liberation Sans", sans-serif;
    stroke: #bbb;
}

.wm-cn {
    font: bold 30px "Noto Sans CJK SC", sans-serif;
}

.wm-url {
    font: 21px "Open Sans", sans-serif;
}
```
